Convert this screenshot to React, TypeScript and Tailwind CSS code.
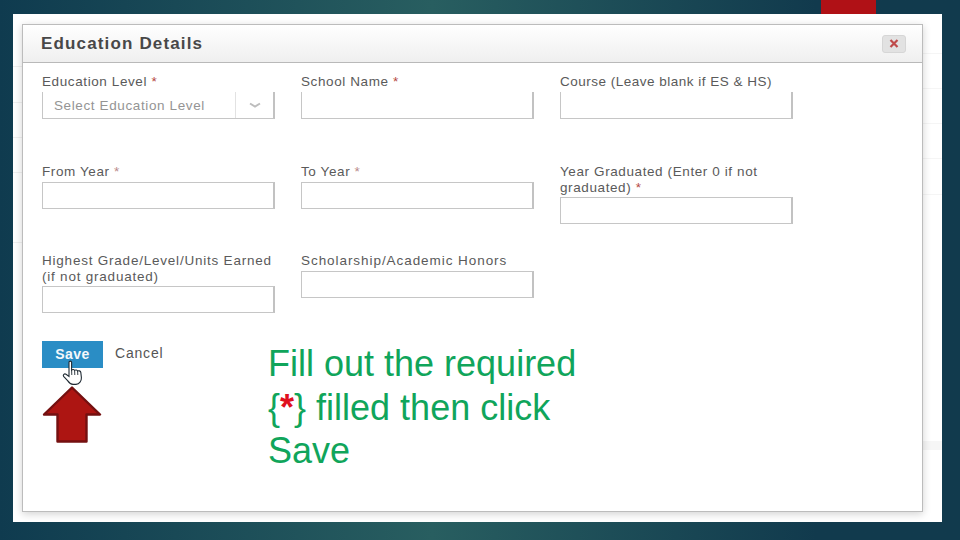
const labelClass = 'block text-[13.5px] leading-[16px] text-[#5a5a5a] pt-px'
const inputClass = 'block w-[233px] h-[27px] bg-white border border-[#c6c6c6] border-r-2 border-r-[#c2c2c2] outline-none'

function Req({ light }: { light?: boolean }) {
  return <span className={light ? 'text-[#b98a8a]' : 'text-[#b5483f]'}> *</span>
}

export default function App() {
  return (
    <div
      className="w-[960px] h-[540px] overflow-hidden bg-gradient-to-r from-[#0f3b4f] from-0% via-[#285e60] via-45% to-[#113a4d] to-85% pt-[14px] pl-[13px] relative"
      style={{ fontFamily: '"Liberation Sans", Arial, sans-serif' }}
    >
      <div className="absolute top-0 left-[821px] w-[55px] h-[14px] bg-[#b01116]" />

      <div className="w-[929px] h-[508px] bg-white pt-[10px] pl-[9px] relative">
        {/* faint rows of the page behind the dialog */}
        <div className="absolute left-0 top-[52px] w-[9px] h-px bg-[#f0f0f0]" />
        <div className="absolute left-0 top-[88px] w-[9px] h-px bg-[#f0f0f0]" />
        <div className="absolute left-0 top-[123px] w-[9px] h-px bg-[#f0f0f0]" />
        <div className="absolute left-0 top-[158px] w-[9px] h-px bg-[#f0f0f0]" />
        <div className="absolute left-0 top-[228px] w-[9px] h-px bg-[#f0f0f0]" />
        <div className="absolute right-0 top-[39px] w-[19px] h-px bg-[#f5f5f5]" />
        <div className="absolute right-0 top-[74px] w-[19px] h-px bg-[#f5f5f5]" />
        <div className="absolute right-0 top-[109px] w-[19px] h-px bg-[#f5f5f5]" />
        <div className="absolute right-0 top-[144px] w-[19px] h-px bg-[#f5f5f5]" />
        <div className="absolute right-0 top-[180px] w-[19px] h-px bg-[#f5f5f5]" />
        <div className="absolute right-0 top-[427px] w-[19px] h-[9px] bg-[#f6f6f6]" />

        <div className="w-[901px] h-[488px] bg-white border border-[#bcbcbc] shadow-[0_2px_8px_rgba(0,0,0,0.18)] relative">
          <div className="h-[38px] bg-gradient-to-b from-white to-[#efefef] border-b border-[#b9b9b9] flex items-center justify-between pl-[18px] pr-[16px]">
            <h2 className="text-[17px] font-bold tracking-[1.15px] text-[#484848]">Education Details</h2>
            <button className="w-[24px] h-[18px] rounded-[3px] bg-[#e2e2e2] border border-[#d6d6d6] flex items-center justify-center">
              <svg width="10" height="9" viewBox="0 0 10 9">
                <path d="M1.5 1 L8.5 8 M8.5 1 L1.5 8" stroke="#bf4a4a" strokeWidth="2.2" />
              </svg>
            </button>
          </div>

          <div className="pl-[19px] pt-[10px]">
            <div className="grid grid-cols-[233px_233px_233px] gap-x-[26px] grid-rows-[90px_89px_auto]">
              <div>
                <label className={`${labelClass} tracking-[0.6px]`}>
                  Education Level
                  <Req />
                </label>
                <div className="mt-[2px] w-[233px] h-[27px] border-b border-l border-[#c6c6c6] border-r-2 border-r-[#c2c2c2] flex items-center">
                  <span className="flex-1 pl-[11px] pt-[2px] text-[13.5px] tracking-[0.62px] text-[#949494] whitespace-nowrap">Select Education Level</span>
                  <span className="w-[38px] h-full border-l border-[#e2e2e2] flex items-center justify-center">
                    <svg width="12" height="6" viewBox="0 0 12 6">
                      <path d="M1 1.5 L6 4.5 L11 1.5" fill="none" stroke="#bdbdbd" strokeWidth="2" />
                    </svg>
                  </span>
                </div>
              </div>
              <div>
                <label className={`${labelClass} tracking-[0.6px]`}>
                  School Name
                  <Req />
                </label>
                <input className={`${inputClass} mt-[2px] border-t-0`} />
              </div>
              <div>
                <label className={`${labelClass} tracking-[0.5px]`}>Course (Leave blank if ES &amp; HS)</label>
                <input className={`${inputClass} mt-[2px] border-t-0`} />
              </div>

              <div>
                <label className={`${labelClass} tracking-[0.6px]`}>
                  From Year
                  <Req light />
                </label>
                <input className={`${inputClass} mt-[2px]`} />
              </div>
              <div>
                <label className={`${labelClass} tracking-[0.6px]`}>
                  To Year
                  <Req light />
                </label>
                <input className={`${inputClass} mt-[2px]`} />
              </div>
              <div>
                <label className={`${labelClass} tracking-[0.6px]`}>
                  Year Graduated (Enter 0 if not
                  <br />
                  graduated)
                  <Req />
                </label>
                <input className={`${inputClass} mt-[1px]`} />
              </div>

              <div>
                <label className={`${labelClass} tracking-[0.78px]`}>
                  Highest Grade/Level/Units Earned
                  <br />
                  (if not graduated)
                </label>
                <input className={`${inputClass} mt-[1px]`} />
              </div>
              <div>
                <label className={`${labelClass} tracking-[0.94px]`}>Scholarship/Academic Honors</label>
                <input className={`${inputClass} mt-[2px]`} />
              </div>
            </div>

            <div className="flex items-center gap-[12px] mt-[28px]">
              <button className="w-[61px] h-[27px] bg-[#2a8dc5] text-[#f4f8fb] text-[14px] font-bold tracking-[0.5px]">Save</button>
              <span className="text-[14px] tracking-[0.8px] text-[#555555] -mt-[3px]">Cancel</span>
            </div>
          </div>

          {/* pointer cursor over the save button */}
          <svg className="absolute left-[39px] top-[335px]" width="24" height="26" viewBox="0 0 24 26">
            <path
              d="M7 2.2 C7 0.8 9.6 0.8 9.6 2.2 L9.6 10 C10.6 9.2 12.2 9.4 12.6 10.4 C13.6 9.6 15.2 10 15.6 11 C16.6 10.4 18.6 10.8 18.8 12.4 L19.4 17.6 C19.6 21 17.4 24 14 24.4 L11 24.4 C8.4 24.2 7 22.6 5.6 20.6 L1.6 16.4 C0.6 15 2.4 13.2 4 14.2 L7 16.4 Z"
              fill="white"
              stroke="#1f2a33"
              strokeWidth="1.1"
            />
            <path d="M9.6 10 L9.8 15 M12.6 10.4 L12.8 15 M15.6 11 L15.8 15" stroke="#1f2a33" strokeWidth="0.9" fill="none" />
          </svg>

          {/* red arrow */}
          <svg className="absolute left-[19px] top-[361px]" width="60" height="57" viewBox="0 0 60 57">
            <path d="M30 1.5 L58 28.5 L44.5 28.5 L44.5 55.5 L15.5 55.5 L15.5 28.5 L2 28.5 Z" fill="#ad1512" stroke="#741010" strokeWidth="2.4" strokeLinejoin="round" />
          </svg>

          {/* slide caption */}
          <p className="absolute left-[245px] top-[317px] w-[340px] text-[36px] leading-[43.5px] text-[#10a55b]">
            Fill out the required
            <br />
            {'{'}
            <span className="text-[#e0101e] font-bold">*</span>
            {'}'} filled then click
            <br />
            Save
          </p>
        </div>
      </div>
    </div>
  )
}
